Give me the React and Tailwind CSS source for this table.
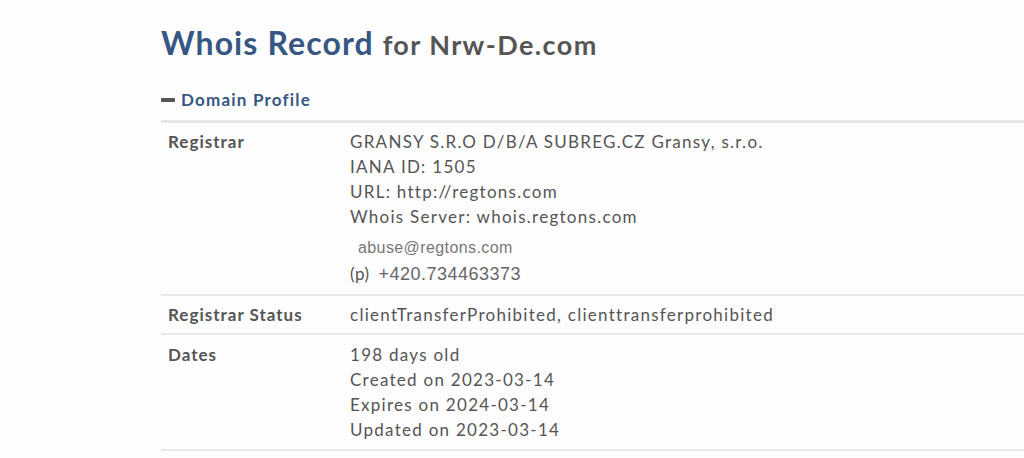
export default function App() {
  const lato = { fontFamily: 'Lato, "Open Sans", sans-serif' };
  const arial = { fontFamily: '"Liberation Sans", Arial, sans-serif' };
  return (
    <div className="min-h-[458px] w-[1024px] bg-[#fdfdfd] overflow-hidden" style={lato}>
      <div className="pl-[161px]">
        <h1 className="pt-[23px] text-[32px] leading-[40px] font-bold text-[#375783] whitespace-nowrap tracking-[1.1px]">
          Whois Record <span className="text-[27px] text-[#555555] tracking-[1.4px]">for Nrw-De.com</span>
        </h1>
        <div className="mt-[23px] flex items-center text-[17px] font-bold text-[#375783] leading-[24px] tracking-[1.2px]">
          <span className="inline-block w-[14px] h-[4px] bg-[#555555] rounded-[1px] mr-[6px]"></span>
          <span>Domain Profile</span>
        </div>
        <div className="mt-[8px] border-t-[3px] border-[#e6e6e6] text-[17px] text-[#555555] tracking-[1.27px]">
          <div className="flex border-b-[2px] border-[#e8e8e8] pt-[6px] pb-[6px]">
            <div className="w-[189px] shrink-0 pl-[7px] font-bold leading-[25px] tracking-[1px]">Registrar</div>
            <div className="leading-[25px]">
              <div>GRANSY S.R.O D/B/A SUBREG.CZ Gransy, s.r.o.</div>
              <div>IANA ID: 1505</div>
              <div>URL: http://regtons.com</div>
              <div>Whois Server: whois.regtons.com</div>
              <div className="mt-[7px] pl-[8px] text-[16px] leading-[24px] text-[#777777] tracking-[0.4px]" style={arial}>abuse@regtons.com</div>
              <div className="flex items-baseline leading-[27px]">
                <span className="text-[17px] tracking-[0.5px]">(p)</span>
                <span className="ml-[9px] text-[18px] text-[#666666] tracking-[0.5px]" style={arial}>+420.734463373</span>
              </div>
            </div>
          </div>
          <div className="flex border-b-[2px] border-[#e8e8e8] pt-[7px] pb-[6px]">
            <div className="w-[189px] shrink-0 pl-[7px] font-bold leading-[24px] tracking-[1px]">Registrar Status</div>
            <div className="leading-[24px]">clientTransferProhibited, clienttransferprohibited</div>
          </div>
          <div className="flex border-b-[2px] border-[#e8e8e8] pt-[7px] pb-[7px]">
            <div className="w-[189px] shrink-0 pl-[7px] font-bold leading-[25px] tracking-[1px]">Dates</div>
            <div className="leading-[25px]">
              <div>198 days old</div>
              <div>Created on 2023-03-14</div>
              <div>Expires on 2024-03-14</div>
              <div>Updated on 2023-03-14</div>
            </div>
          </div>
        </div>
      </div>
    </div>
  );
}
